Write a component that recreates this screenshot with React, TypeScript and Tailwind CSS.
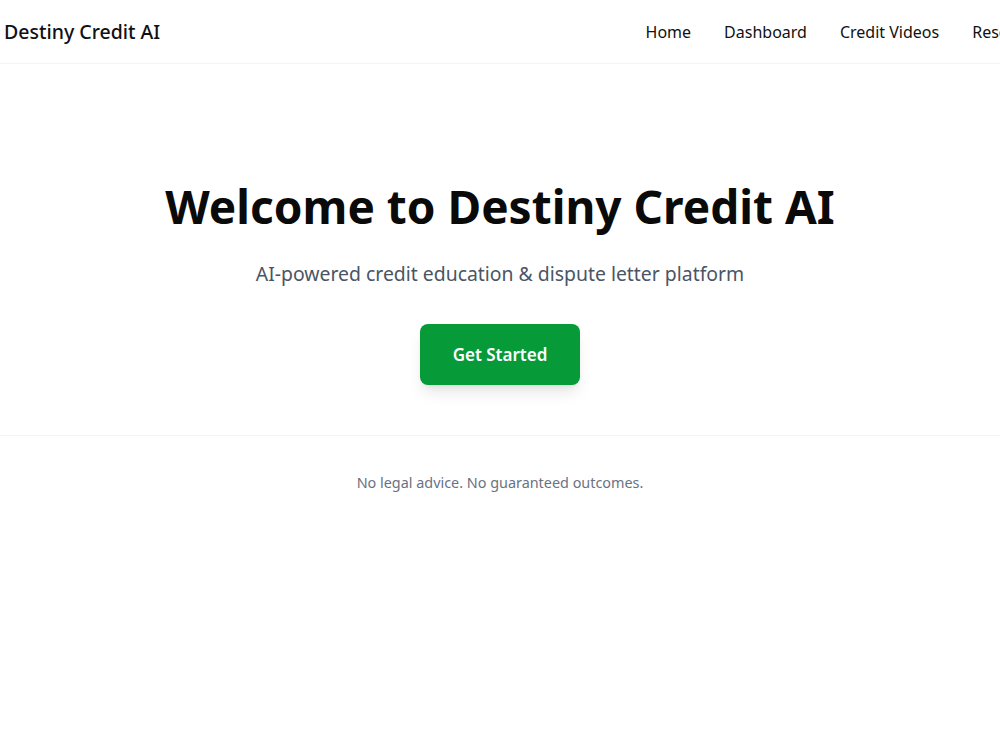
const navLinks = ['Home', 'Dashboard', 'Credit Videos', 'Resources', 'Login'];

export default function App() {
  return (
    <div className="min-h-screen bg-white text-[#111] overflow-hidden" style={{ fontFamily: '"Noto Sans", "Open Sans", sans-serif' }}>
      {/* Top bar */}
      <header className="h-16 border-b border-gray-100 flex items-center">
        <div className="flex items-center justify-between w-[1124px] shrink-0 pl-1">
          <span className="text-[19.5px] font-medium whitespace-nowrap">Destiny Credit AI</span>
          <nav className="flex items-center gap-[33px] whitespace-nowrap">
            {navLinks.map((link) => (
              <a key={link} href="#" className="text-base text-[#111]">
                {link}
              </a>
            ))}
          </nav>
        </div>
      </header>

      {/* Hero */}
      <section className="flex flex-col items-center text-center pt-[119px] pb-[50px] border-b border-gray-100">
        <h1 className="text-[46px] font-bold leading-none text-[#0a0a0a]">Welcome to Destiny Credit AI</h1>
        <p className="mt-[30px] text-[19.4px] text-gray-600">AI-powered credit education &amp; dispute letter platform</p>
        <button className="mt-[36px] w-40 h-[61px] rounded-lg bg-[#079a38] text-white text-[17px] font-semibold shadow-lg">
          Get Started
        </button>
      </section>

      {/* Disclaimer */}
      <footer className="pt-9 text-center">
        <p className="text-[14.4px] text-gray-500">No legal advice. No guaranteed outcomes.</p>
      </footer>
    </div>
  );
}
